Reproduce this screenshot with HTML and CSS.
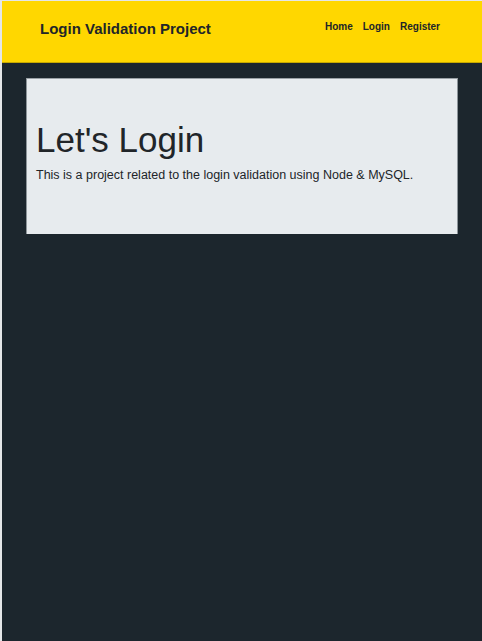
FILE: index.html
```html
<!DOCTYPE html>
<html>
<head>
<meta charset="utf-8">
<link rel="stylesheet" href="styles.css">
</head>
<body>
<div class="page">
  <header class="topbar">
    <div class="brand">Login Validation Project</div>
    <nav class="nav">
      <a href="#">Home</a>
      <a href="#">Login</a>
      <a href="#">Register</a>
    </nav>
  </header>
  <main class="content">
    <section class="card">
      <h1 class="title">Let's Login</h1>
      <p class="lead">This is a project related to the login validation using Node &amp; MySQL.</p>
    </section>
  </main>
</div>
</body>
</html>
```
FILE: styles.css
```css
html, body {
  margin: 0;
  padding: 0;
  height: 100%;
}
body {
  background: #e4e6e8;
  padding: 1px 0 0 2px;
  box-sizing: border-box;
  font-family: "Liberation Sans", Arial, sans-serif;
  color: #212529;
}
.page {
  background: #1c262d;
  height: 100%;
  display: flex;
  flex-direction: column;
}
.topbar {
  background: #ffd700;
  height: 61px;
  border-bottom: 1px solid #c7a900;
  display: flex;
  align-items: flex-start;
  justify-content: space-between;
  padding: 0 42px 0 38px;
}
.brand {
  font-weight: bold;
  font-size: 15px;
  margin-top: 19px;
  color: #212529;
}
.nav {
  display: flex;
  gap: 10px;
  margin-top: 20px;
}
.nav a {
  font-size: 10px;
  font-weight: bold;
  color: #212529;
  text-decoration: none;
}
.content {
  padding: 15px 24px 0 24px;
}
.card {
  background: #e7ebee;
  height: 156px;
  box-sizing: border-box;
  border-top: 1px solid #9aa1a6;
  border-left: 1px solid #8d959a;
  border-right: 1px solid #8d959a;
  padding: 40px 10px 0 9px;
}
.title {
  margin: 0;
  font-size: 35px;
  font-weight: normal;
  line-height: 1.2;
}
.lead {
  margin: 7px 0 0 0;
  font-size: 12.5px;
}
```
